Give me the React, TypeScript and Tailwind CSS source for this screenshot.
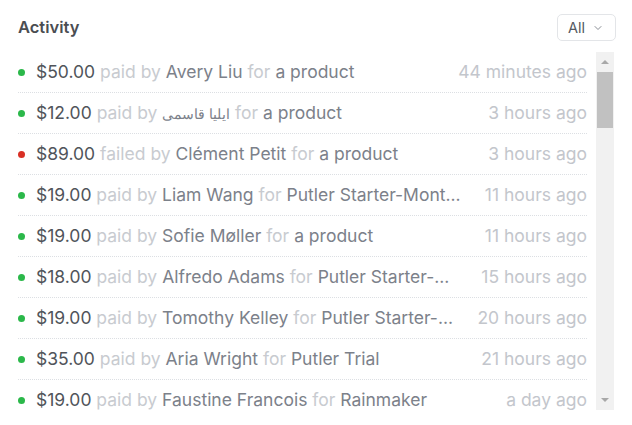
import { ChevronDown } from 'lucide-react'

type Row = {
  amount: string
  verb: 'paid' | 'failed'
  name: string
  product: string
  time: string
  rtl?: boolean
}

const rows: Row[] = [
  { amount: '$50.00', verb: 'paid', name: 'Avery Liu', product: 'a product', time: '44 minutes ago' },
  { amount: '$12.00', verb: 'paid', name: 'ایلیا قاسمی', product: 'a product', time: '3 hours ago', rtl: true },
  { amount: '$89.00', verb: 'failed', name: 'Clément Petit', product: 'a product', time: '3 hours ago' },
  { amount: '$19.00', verb: 'paid', name: 'Liam Wang', product: 'Putler Starter-Mont...', time: '11 hours ago' },
  { amount: '$19.00', verb: 'paid', name: 'Sofie Møller', product: 'a product', time: '11 hours ago' },
  { amount: '$18.00', verb: 'paid', name: 'Alfredo Adams', product: 'Putler Starter-...', time: '15 hours ago' },
  { amount: '$19.00', verb: 'paid', name: 'Tomothy Kelley', product: 'Putler Starter-...', time: '20 hours ago' },
  { amount: '$35.00', verb: 'paid', name: 'Aria Wright', product: 'Putler Trial', time: '21 hours ago' },
  { amount: '$19.00', verb: 'paid', name: 'Faustine Francois', product: 'Rainmaker', time: 'a day ago' },
]

function ActivityRow({ row }: { row: Row }) {
  return (
    <li className="flex h-[41px] shrink-0 items-center border-b border-dotted border-[#dcdfe3]">
      <span
        className={
          row.verb === 'failed'
            ? 'h-[7px] w-[7px] shrink-0 rounded-full bg-[#d93025]'
            : 'h-[7px] w-[7px] shrink-0 rounded-full bg-[#2bb84a]'
        }
      />
      <div className="ml-[11px] min-w-0 flex-1 overflow-hidden whitespace-nowrap">
        <span className="text-[#50545a]">{row.amount}</span>{' '}
        <span className="text-[#c8cbd0]">{row.verb} by</span>{' '}
        {row.rtl ? (
          <bdi className="text-[13.5px] text-[#7c818a]">{row.name}</bdi>
        ) : (
          <span className="text-[#7c818a]">{row.name}</span>
        )}{' '}
        <span className="text-[#c8cbd0]">for</span>{' '}
        <span className="text-[#7c818a]">{row.product}</span>
      </div>
      <span className="ml-3 shrink-0 text-[#c3c6cc]">{row.time}</span>
    </li>
  )
}

export default function App() {
  return (
    <div className="h-[425px] w-[632px] overflow-hidden bg-white font-['Inter','Liberation_Sans',sans-serif]">
      {/* 顶部 */}
      <header className="flex h-[52px] items-start justify-between pl-[18px] pr-[16px] pt-[14px]">
        <h2 className="text-[16.5px] font-semibold leading-[27px] text-[#4a4d52]">Activity</h2>
        <button className="flex h-[27px] items-center gap-[7px] rounded-[5px] border border-[#e3e5e8] pl-[10px] pr-[11px] text-[14.5px] text-[#555a61]">
          All
          <ChevronDown size={12} strokeWidth={1.6} className="text-[#6b7078]" />
        </button>
      </header>

      {/* 列表 + 滚动条 */}
      <div className="flex h-[358px] pl-[18px] pr-[18px]">
        <ul className="flex min-w-0 flex-1 flex-col overflow-hidden text-[17.5px]">
          {rows.map((r, i) => (
            <ActivityRow key={i} row={r} />
          ))}
        </ul>
        <div className="ml-[9px] flex w-[18px] flex-col items-center bg-[#f1f1f1]">
          <div className="flex h-[20px] w-full items-center justify-center">
            <span className="h-0 w-0 border-x-[4px] border-b-[4px] border-x-transparent border-b-[#a8a8a8]" />
          </div>
          <div className="h-[56px] w-[16px] bg-[#c1c1c1]" />
          <div className="flex-1" />
          <div className="flex h-[20px] w-full items-center justify-center">
            <span className="h-0 w-0 border-x-[4px] border-t-[4px] border-x-transparent border-t-[#a8a8a8]" />
          </div>
        </div>
      </div>
    </div>
  )
}
